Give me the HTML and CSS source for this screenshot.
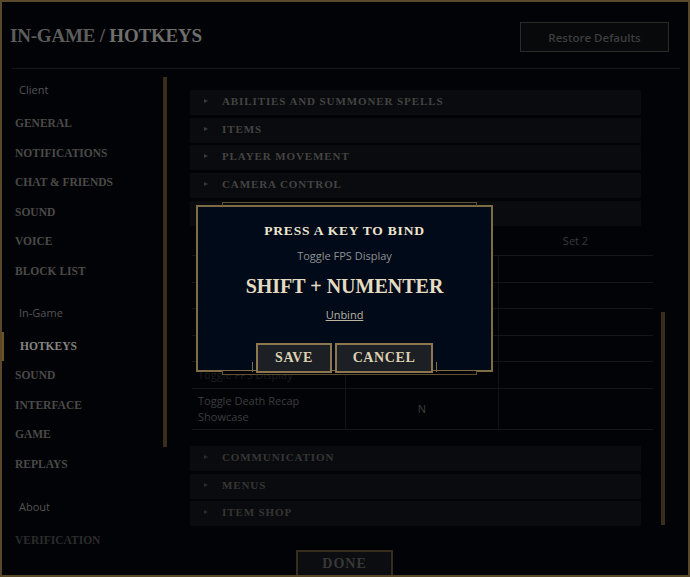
FILE: index.html
```html
<!DOCTYPE html>
<html>
<head>
<meta charset="utf-8">
<link rel="stylesheet" href="styles.css">
</head>
<body>
<div class="app">
  <header class="top">
    <h1 class="title"><span class="crumb">IN-GAME / </span><span class="current">HOTKEYS</span></h1>
    <button class="restore">Restore Defaults</button>
  </header>
  <div class="divider"></div>
  <div class="main">
    <aside class="side">
      <nav class="nav">
        <div class="nav-label">Client</div>
        <div class="nav-item">GENERAL</div>
        <div class="nav-item">NOTIFICATIONS</div>
        <div class="nav-item">CHAT &amp; FRIENDS</div>
        <div class="nav-item">SOUND</div>
        <div class="nav-item">VOICE</div>
        <div class="nav-item">BLOCK LIST</div>
        <div class="nav-label nav-label-gap">In-Game</div>
        <div class="nav-item active">HOTKEYS</div>
        <div class="nav-item">SOUND</div>
        <div class="nav-item">INTERFACE</div>
        <div class="nav-item">GAME</div>
        <div class="nav-item">REPLAYS</div>
        <div class="nav-label nav-label-gap2">About</div>
        <div class="nav-item faint">VERIFICATION</div>
      </nav>
      <div class="side-scroll"></div>
    </aside>
    <section class="content">
      <div class="col">
        <div class="acc"><span class="caret"></span>ABILITIES AND SUMMONER SPELLS</div>
        <div class="acc"><span class="caret"></span>ITEMS</div>
        <div class="acc"><span class="caret"></span>PLAYER MOVEMENT</div>
        <div class="acc"><span class="caret"></span>CAMERA CONTROL</div>
        <div class="acc acc-open"></div>
        <div class="table">
          <div class="thead">
            <div class="hcell"></div>
            <div class="hcell"></div>
            <div class="hcell">Set 2</div>
          </div>
          <div class="trow"><div class="cell label"></div><div class="cell key"></div><div class="cell key"></div></div>
          <div class="trow"><div class="cell label"></div><div class="cell key"></div><div class="cell key"></div></div>
          <div class="trow"><div class="cell label"></div><div class="cell key"></div><div class="cell key"></div></div>
          <div class="trow"><div class="cell label"></div><div class="cell key"></div><div class="cell key"></div></div>
          <div class="trow"><div class="cell label low">Toggle FPS Display</div><div class="cell key"></div><div class="cell key"></div></div>
          <div class="trow tall"><div class="cell label">Toggle Death Recap Showcase</div><div class="cell key">N</div><div class="cell key"></div></div>
        </div>
        <div class="acc acc-after"><span class="caret"></span>COMMUNICATION</div>
        <div class="acc"><span class="caret"></span>MENUS</div>
        <div class="acc"><span class="caret"></span>ITEM SHOP</div>
        <div class="footer"><button class="done">DONE</button></div>
      </div>
      <div class="scroll"></div>
    </section>
  </div>

  <div class="overlay">
    <div class="modal">
      <div class="tab tab-top"></div>
      <div class="tab tab-bottom"></div>
      <div class="m-title">PRESS A KEY TO BIND</div>
      <div class="m-sub">Toggle FPS Display</div>
      <div class="m-keys">SHIFT + NUMENTER</div>
      <a class="m-unbind">Unbind</a>
      <div class="m-actions">
        <button class="m-btn save">SAVE</button>
        <button class="m-btn cancel">CANCEL</button>
      </div>
    </div>
  </div>
</div>
</body>
</html>
```

FILE: styles.css
```css
* { box-sizing: border-box; }
html, body { margin: 0; padding: 0; background: #020307; }
body { width: 690px; height: 577px; overflow: hidden; }

.app {
  position: relative;
  width: 690px;
  height: 577px;
  border: 2px solid #5a482a;
  background: #020307;
  overflow: hidden;
  display: flex;
  flex-direction: column;
  font-family: "Open Sans", "Liberation Sans", sans-serif;
}

.top {
  height: 66px;
  flex: none;
  display: flex;
  align-items: center;
  justify-content: space-between;
  padding: 0 19px 0 8px;
}
.title {
  margin: 0;
  margin-top: 2px;
  font-family: "Liberation Serif", serif;
  font-weight: bold;
  font-size: 19px;
  letter-spacing: -0.2px;
  color: #5d5d5b;
}
.title .current { color: #6f6e6b; }
.restore {
  margin-top: 4px;
  width: 149px;
  height: 30px;
  background: #08090b;
  border: 1px solid #2b2a27;
  color: #3e3e3d;
  font-family: "Open Sans", "Liberation Sans", sans-serif;
  font-size: 11.5px;
  font-weight: 600;
  padding: 0;
}
.divider {
  flex: none;
  height: 1px;
  margin: 0 8px 0 10px;
  background: #17171a;
}

.main {
  flex: 1;
  display: flex;
  min-height: 0;
}

.side {
  flex: none;
  width: 178px;
  display: flex;
}
.nav {
  width: 161px;
  padding-top: 6px;
  display: flex;
  flex-direction: column;
}
.nav > * { flex: none; }
.nav-label {
  height: 30px;
  line-height: 30px;
  padding-left: 17px;
  margin-bottom: 4px;
  font-size: 11px;
  color: #545452;
}
.nav-label-gap { margin-top: 11px; }
.nav-label-gap2 { margin-top: 12px; }
.nav-item {
  height: 29.6px;
  line-height: 29.6px;
  border-left: 2px solid transparent;
  padding-left: 11px;
  font-family: "Liberation Serif", serif;
  font-weight: bold;
  font-size: 11.5px;
  letter-spacing: 0;
  color: #4b4a47;
  white-space: nowrap;
}
.nav-item.active {
  border-left-color: #6b5528;
  padding-left: 16px;
  color: #858480;
}
.nav-item.faint { color: #2c2c2c; }
.side-scroll {
  width: 4px;
  margin-top: 8px;
  height: 370px;
  background: #3a2e1a;
}

.content {
  flex: 1;
  display: flex;
  padding-left: 10px;
}
.col {
  width: 464px;
  padding-top: 21px;
  display: flex;
  flex-direction: column;
}
.col > * { flex: none; }
.scroll {
  width: 4px;
  margin-left: 7px;
  margin-top: 243px;
  height: 213px;
  background: #3a2e1a;
}

.acc {
  width: 451px;
  height: 25px;
  margin-bottom: 2.7px;
  background: #0a0b0e;
  padding-left: 14px;
  padding-bottom: 3px;
  display: flex;
  align-items: center;
  font-family: "Liberation Serif", serif;
  font-weight: bold;
  font-size: 11px;
  letter-spacing: 0.9px;
  color: #444442;
  white-space: nowrap;
}
.acc-open { margin-bottom: 0; }
.acc-after { margin-top: 16px; color: #363634; }
.acc-after ~ .acc { color: #363634; }
.caret {
  width: 0;
  height: 0;
  border-left: 4px solid #3a3a3a;
  border-top: 2.5px solid transparent;
  border-bottom: 2.5px solid transparent;
  margin-right: 14px;
}
.acc-after .caret, .acc-after ~ .acc .caret { border-left-color: #2c2c2c; }

.table {
  width: 461px;
  margin-left: 2px;
  display: flex;
  flex-direction: column;
}
.table > * { flex: none; }
.thead {
  height: 29.2px;
  display: grid;
  grid-template-columns: 153px 153px 155px;
  align-items: center;
}
.hcell {
  text-align: center;
  font-size: 11px;
  color: #393938;
}
.trow {
  height: 26.6px;
  display: grid;
  grid-template-columns: 153px 153px 155px;
  border-top: 1px solid #16161a;
}
.trow.tall {
  height: 42px;
  border-bottom: 1px solid #16161a;
}
.cell {
  display: flex;
  align-items: center;
  font-size: 11px;
  color: #3d3d3c;
}
.cell.label {
  padding-left: 6px;
  line-height: 16px;
  padding-right: 40px;
}
.cell.low { color: #1d1d1e; }
.cell.key {
  justify-content: center;
  border-left: 1px solid #121215;
}

.footer {
  margin-top: 20.6px;
  padding-left: 106px;
}
.done {
  width: 97px;
  height: 32px;
  padding: 0 0 4px;
  background: #0b0d10;
  border: 2px solid #362d1d;
  color: #383836;
  font-family: "Liberation Serif", serif;
  font-weight: bold;
  font-size: 14px;
  letter-spacing: 1px;
}

/* modal overlay */
.overlay {
  position: absolute;
  inset: 0;
  display: flex;
  align-items: center;
  justify-content: center;
}
.modal {
  position: relative;
  width: 297px;
  height: 167px;
  border: 2px solid #7f6c45;
  background: #010a19;
  display: flex;
  flex-direction: column;
  align-items: center;
  padding-top: 15px;
  margin-left: -1px;
}
.tab {
  position: absolute;
  left: 24px;
  right: 14px;
  height: 4px;
  border: 1px solid #5e4f32;
}
.tab-top { top: -5px; border-bottom: none; }
.tab-bottom { bottom: -5px; border-top: none; background: #020307; }
.m-title {
  line-height: 18px;
  font-family: "Liberation Serif", serif;
  font-weight: bold;
  font-size: 13.5px;
  letter-spacing: 0.8px;
  color: #efe6d0;
}
.m-sub {
  margin-top: 8px;
  line-height: 16px;
  font-size: 11px;
  color: #8f9192;
}
.m-keys {
  margin-top: 9px;
  line-height: 26px;
  font-family: "Liberation Serif", serif;
  font-weight: bold;
  font-size: 20px;
  letter-spacing: 0;
  color: #e4dcc2;
}
.m-unbind {
  margin-top: 8px;
  line-height: 16px;
  font-size: 11px;
  color: #b9b3a0;
  text-decoration: underline;
}
.m-actions {
  position: relative;
  margin-top: 20px;
  display: flex;
  gap: 3px;
  padding: 0 4px;
}
.m-actions::before,
.m-actions::after {
  content: "";
  position: absolute;
  bottom: 1px;
  width: 1px;
  height: 10px;
  background: #7f6c45;
}
.m-actions::before { left: 0; }
.m-actions::after { right: 0; }
.m-btn {
  height: 30px;
  padding: 0 0 1px;
  background: #1c2025;
  border: 2px solid #8c7750;
  color: #dcd1b2;
  font-family: "Liberation Serif", serif;
  font-weight: bold;
  font-size: 14px;
  letter-spacing: 0.6px;
}
.save { width: 76px; }
.cancel { width: 98px; }
```
